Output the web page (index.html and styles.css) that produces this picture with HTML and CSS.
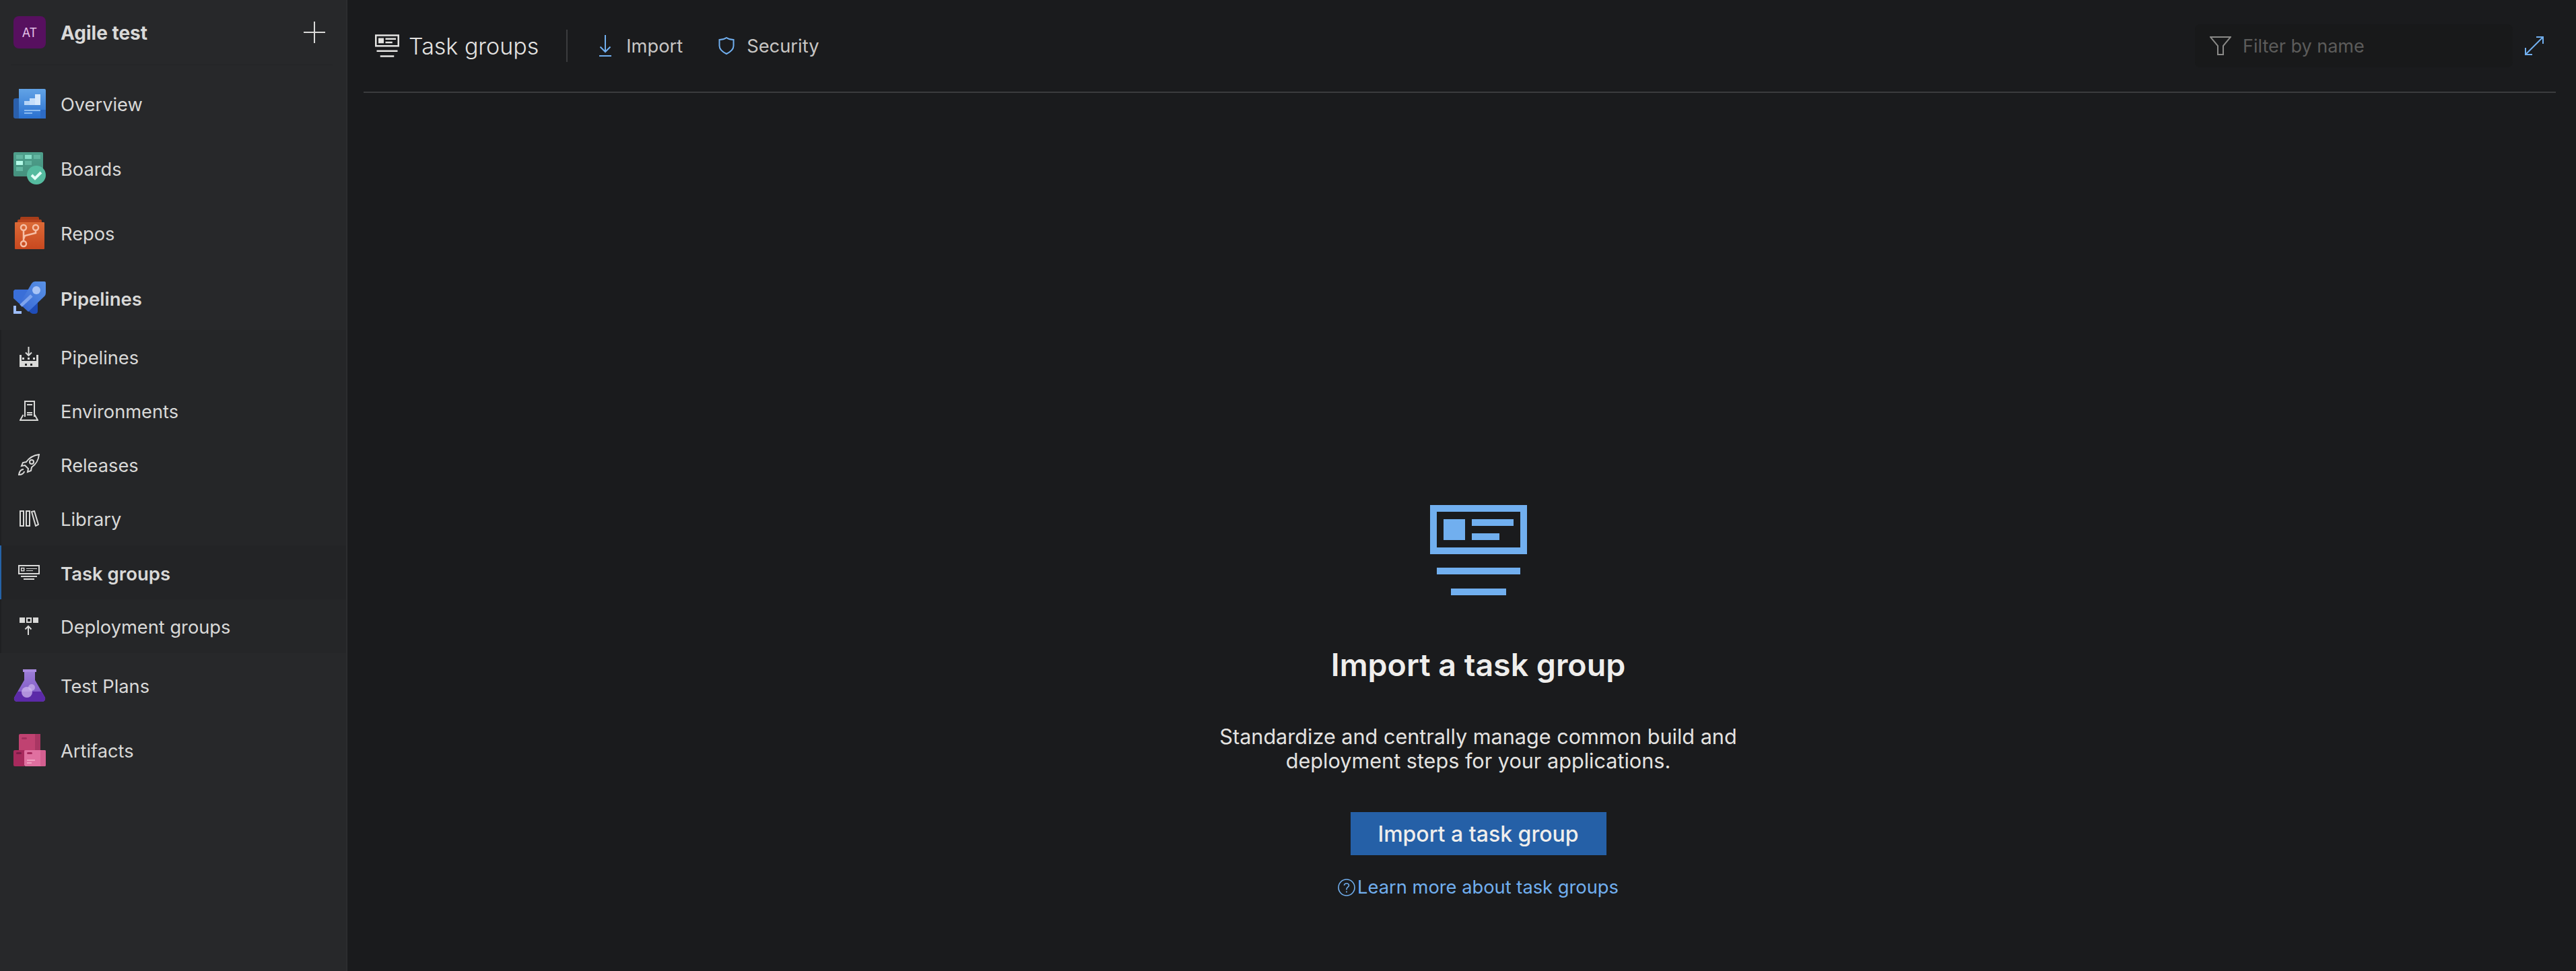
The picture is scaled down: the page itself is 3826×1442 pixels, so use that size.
FILE: index.html
```html
<!DOCTYPE html>
<html lang="en">
<head>
    <meta charset="UTF-8">
    <meta name="viewport" content="width=device-width, initial-scale=1.0">
    <title>Task groups</title>
    <link rel="stylesheet" href="styles.css">
</head>
<body>
    <svg class="defs" width="0" height="0">
        <defs>
            <symbol id="taskgroup" viewBox="0 0 144 134">
                <path fill-rule="evenodd" d="M0 0H144V73H0ZM10 10V63H134V10Z"/>
                <rect x="20" y="21" width="32" height="31"/>
                <rect x="62" y="21" width="62" height="10"/>
                <rect x="62" y="42" width="41" height="10"/>
                <rect x="10" y="93" width="124" height="10"/>
                <rect x="31" y="124" width="82" height="10"/>
            </symbol>
            <linearGradient id="gradOverview" x1="0" y1="0" x2="0" y2="1"><stop offset="0" stop-color="#62a3e6"/><stop offset="1" stop-color="#2a71d0"/></linearGradient>
            <linearGradient id="gradBoards" x1="0" y1="0" x2="0" y2="1"><stop offset="0" stop-color="#4e9f8b"/><stop offset="1" stop-color="#45917e"/></linearGradient>
            <linearGradient id="gradRepos" x1="0" y1="0" x2="0" y2="1"><stop offset="0" stop-color="#dc6a37"/><stop offset="1" stop-color="#c8481f"/></linearGradient>
            <linearGradient id="gradRocket" x1="0" y1="1" x2="1" y2="0"><stop offset="0" stop-color="#3565d3"/><stop offset="1" stop-color="#5a93e6"/></linearGradient>
            <linearGradient id="gradFlask" x1="0" y1="0" x2="0" y2="1"><stop offset="0" stop-color="#9a7bd6"/><stop offset="1" stop-color="#7a52c2"/></linearGradient>
        </defs>
    </svg>

    <aside class="sidebar">
        <div class="project">
            <span class="avatar">AT</span>
            <span class="project-name">Agile test</span>
            <svg class="plus" viewBox="0 0 32 32"><path d="M0 16H32M16 0V32"/></svg>
        </div>

        <nav class="nav">
            <a class="nav-item">
                <svg class="hub-icon" viewBox="0 0 48 48">
                    <rect x="0" y="16" width="20" height="30" rx="3" fill="#2a5fab"/>
                    <path d="M8 2H46Q48 2 48 4V44Q48 46 46 46H8Z" fill="url(#gradOverview)"/>
                    <rect x="40" y="33" width="8" height="13" fill="#2d6bc4"/>
                    <rect x="16" y="20" width="8" height="6" fill="#b5d4f7"/>
                    <rect x="24" y="16" width="8" height="10" fill="#c4defa"/>
                    <rect x="32" y="10" width="8" height="16" fill="#d5e8fc"/>
                    <rect x="16" y="33" width="24" height="2" fill="#8cbcf0"/>
                    <rect x="16" y="37" width="12" height="2" fill="#8cbcf0"/>
                </svg>
                <span>Overview</span>
            </a>
            <a class="nav-item">
                <svg class="hub-icon" viewBox="0 0 48 48">
                    <rect x="0" y="0" width="44" height="36" rx="2" fill="url(#gradBoards)"/>
                    <rect x="4" y="4" width="10" height="6" fill="#62b5a0"/>
                    <rect x="17" y="4" width="10" height="6" fill="#86dcc6"/>
                    <rect x="30" y="4" width="10" height="6" fill="#62b5a0"/>
                    <rect x="4" y="13" width="10" height="6" fill="#b6fbe9"/>
                    <rect x="17" y="13" width="10" height="6" fill="#62b5a0"/>
                    <rect x="4" y="22" width="10" height="6" fill="#62b5a0"/>
                    <circle cx="34" cy="34" r="14" fill="#55bb9f"/>
                    <path d="M27 34L32 39L41 30" fill="none" stroke="#e4fff7" stroke-width="4"/>
                </svg>
                <span>Boards</span>
            </a>
            <a class="nav-item">
                <svg class="hub-icon" viewBox="0 0 48 48">
                    <rect x="10" y="0" width="28" height="6" rx="2" fill="#a83d19"/>
                    <rect x="6" y="4" width="36" height="6" rx="2" fill="#b8441e"/>
                    <rect x="2" y="8" width="44" height="40" rx="1" fill="url(#gradRepos)"/>
                    <g fill="none" stroke="#f6bfa6" stroke-width="2.5">
                        <circle cx="15" cy="16" r="4"/>
                        <circle cx="33" cy="16" r="4"/>
                        <circle cx="15" cy="40" r="4"/>
                        <path d="M15 20V36M15 33L17 28L33 24V20"/>
                    </g>
                </svg>
                <span>Repos</span>
            </a>
            <a class="nav-item nav-hub-active">
                <svg class="hub-icon" viewBox="0 0 48 48">
                    <path d="M2 12H24L12 36L0 25V14Z" fill="#3a6fd8"/>
                    <path d="M36 22V44Q36 48 32 48H29Q27 48 25 46L16 38Z" fill="#1f4db8"/>
                    <path d="M27 3Q29 0 32 0H46Q48 0 48 2V17Q48 20 46 22L22 45L10 34L11 30Z" fill="url(#gradRocket)"/>
                    <circle cx="34" cy="13" r="6" fill="#a9c4f6"/>
                    <path d="M11 36L27 21" stroke="#7ea4ee" stroke-width="5"/>
                    <path d="M0 36H4V44H12V48H0Z" fill="#9dbdf9"/>
                </svg>
                <span>Pipelines</span>
            </a>

            <div class="subnav">
                <a class="sub-item">
                    <span class="sub-icon">
                        <svg width="28" height="30" viewBox="0 0 28 30">
                            <path class="ln" d="M13.5 0V13M9 8.5L13.5 13L18 8.5"/>
                            <path class="fl" fill-rule="evenodd" d="M0 12H3V21H25V12H28V30H0ZM8 25V28H11V25ZM16 25V28H19V25Z"/>
                            <rect class="fl" x="4" y="16" width="3" height="3"/>
                            <rect class="fl" x="12" y="16" width="3" height="3"/>
                            <rect class="fl" x="20" y="16" width="3" height="3"/>
                        </svg>
                    </span>
                    <span>Pipelines</span>
                </a>
                <a class="sub-item">
                    <span class="sub-icon">
                        <svg width="28" height="30" viewBox="0 0 28 30">
                            <path class="ln" d="M8 24V1H22V24M11 6H19M11 18H19M11 21H19"/>
                            <path class="ln" d="M5.5 21L1 29H27L22.5 21"/>
                        </svg>
                    </span>
                    <span>Environments</span>
                </a>
                <a class="sub-item">
                    <span class="sub-icon">
                        <svg width="32" height="32" viewBox="0 0 32 32">
                            <path class="ln" d="M31 1C23 2 17 5 12 12L7 13L5 18L10 17L15 22L14 27L19 25L20 20C27 15 30 10 31 1Z"/>
                            <circle class="ln" cx="20" cy="12" r="3"/>
                            <path class="ln" d="M8 23C5 23 2 25 1 31C5 31 9 29 9 26"/>
                        </svg>
                    </span>
                    <span>Releases</span>
                </a>
                <a class="sub-item">
                    <span class="sub-icon">
                        <svg width="29" height="24" viewBox="0 0 29 24">
                            <rect class="ln" x="1" y="1" width="5" height="22"/>
                            <rect class="ln" x="10" y="1" width="5" height="22"/>
                            <path class="ln" d="M18 2L22 1L28 21L24 23Z"/>
                        </svg>
                    </span>
                    <span>Library</span>
                </a>
                <a class="sub-item sub-item-active">
                    <span class="sub-icon">
                        <svg width="32" height="22" viewBox="0 0 32 22">
                            <rect class="ln" x="1" y="1" width="30" height="12"/>
                            <rect class="ln thin" x="4.7" y="4.7" width="4" height="4"/>
                            <path class="fl" d="M12 5H28V6H12ZM12 8H22V9H12ZM4 16H28V18H4ZM8 20H24V22H8Z"/>
                        </svg>
                    </span>
                    <span>Task groups</span>
                </a>
                <a class="sub-item">
                    <span class="sub-icon">
                        <svg width="28" height="26" viewBox="0 0 28 26">
                            <rect class="fl" x="0" y="0" width="8" height="8"/>
                            <rect class="ln" x="11" y="1" width="6" height="6"/>
                            <rect class="fl" x="20" y="0" width="8" height="8"/>
                            <path class="ln" d="M13 26V13M8.5 17.5L13 13L17.5 17.5"/>
                        </svg>
                    </span>
                    <span>Deployment groups</span>
                </a>
            </div>

            <a class="nav-item">
                <svg class="hub-icon" viewBox="0 0 48 48">
                    <path d="M16 4H32V16L47 42Q48 48 42 48H6Q0 48 1 42L16 16Z" fill="url(#gradFlask)"/>
                    <path d="M6.5 33H41.5L47 42Q48 48 42 48H6Q0 48 1 42Z" fill="#5c2aa8"/>
                    <rect x="14" y="0" width="20" height="4" fill="#a98ae0"/>
                    <circle cx="27" cy="27" r="5" fill="#c6aeea" opacity=".75"/>
                    <circle cx="20" cy="34" r="8" fill="#cdb6ee" opacity=".75"/>
                </svg>
                <span>Test Plans</span>
            </a>
            <a class="nav-item">
                <svg class="hub-icon" viewBox="0 0 48 48">
                    <rect x="8" y="0" width="32" height="26" rx="2" fill="#c04271"/>
                    <rect x="32" y="0" width="8" height="26" fill="#a93663"/>
                    <path d="M2 24H16V48H2Q0 48 0 46V26Q0 24 2 24Z" fill="#a82a5d"/>
                    <rect x="16" y="24" width="32" height="24" rx="2" fill="#e070a0"/>
                    <rect x="40" y="24" width="8" height="24" rx="2" fill="#d45f90"/>
                    <rect x="4" y="27" width="8" height="3" rx="1.5" fill="#7d1c48"/>
                    <rect x="20" y="27" width="8" height="3" rx="1.5" fill="#a82a5d"/>
                    <rect x="12" y="5" width="8" height="3" rx="1.5" fill="#a32f5d"/>
                    <rect x="20" y="38" width="12" height="2" fill="#f0a0c0"/>
                    <rect x="20" y="42" width="7" height="2" fill="#f0a0c0"/>
                </svg>
                <span>Artifacts</span>
            </a>
        </nav>
    </aside>

    <main class="main">
        <header class="toolbar">
            <svg class="title-icon"><use href="#taskgroup"/></svg>
            <h1 class="title">Task groups</h1>
            <span class="toolbar-sep"></span>
            <a class="tool">
                <svg width="18" height="32" viewBox="0 0 18 32">
                    <path d="M9 0V25M1.5 17.5L9 25L16.5 17.5M0 31H18" fill="none" stroke="currentColor" stroke-width="2"/>
                </svg>
                <span>Import</span>
            </a>
            <a class="tool">
                <svg width="24" height="26" viewBox="0 0 24 26">
                    <path d="M12 1C9 3 6 4 1.5 4V13C1.5 18 6 22 12 25C18 22 22.5 18 22.5 13V4C18 4 15 3 12 1Z" fill="none" stroke="currentColor" stroke-width="2"/>
                </svg>
                <span>Security</span>
            </a>
            <div class="filter">
                <svg width="32" height="28" viewBox="0 0 32 28">
                    <path d="M1 1H31L20 14V27H12V14Z" fill="none" stroke="#8a8a88" stroke-width="2"/>
                </svg>
                <span class="filter-text">Filter by name</span>
            </div>
            <svg class="expand" width="28" height="28" viewBox="0 0 28 28">
                <path d="M1 27L27 1M17 1H27V11M1 17V27H11" fill="none" stroke="currentColor" stroke-width="2"/>
            </svg>
        </header>

        <section class="empty">
            <svg class="empty-icon"><use href="#taskgroup"/></svg>
            <h2 class="empty-title">Import a task group</h2>
            <p class="empty-text">Standardize and centrally manage common build and<br>deployment steps for your applications.</p>
            <button class="primary">Import a task group</button>
            <a class="learn">
                <svg width="26" height="26" viewBox="0 0 26 26">
                    <circle cx="13" cy="13" r="12" fill="none" stroke="currentColor" stroke-width="1.6"/>
                    <path d="M9.5 10C9.5 8 11 7 13 7C15 7 16.5 8.2 16.5 10C16.5 12.5 13 12.5 13 15.5V16.5" fill="none" stroke="currentColor" stroke-width="1.6"/>
                    <circle cx="13" cy="19.5" r="1.1" fill="currentColor"/>
                </svg>
                <span>Learn more about task groups</span>
            </a>
        </section>
    </main>
</body>
</html>
```

FILE: styles.css
```css
* {
    box-sizing: border-box;
}
html, body {
    margin: 0;
    height: 100%;
    overflow: hidden;
}
body {
    display: flex;
    font-family: Inter, "Noto Sans", sans-serif;
    background: #1a1b1d;
    color: #d9d9d8;
}
.defs {
    position: absolute;
}

/* sidebar */
.sidebar {
    flex: none;
    width: 516px;
    background: #27282a;
    border-right: 2px solid #2c2d2f;
}
.project {
    position: relative;
    display: flex;
    align-items: center;
    height: 97px;
    padding: 0 0 1px 20px;
}
.project::after {
    content: "";
    position: absolute;
    left: 16px;
    right: 20px;
    bottom: 0;
    height: 1px;
    background: #232426;
}
.avatar {
    display: flex;
    align-items: center;
    justify-content: center;
    width: 48px;
    height: 48px;
    border-radius: 8px;
    background: #57105f;
    color: #e2bfe6;
    font-size: 18px;
}
.project-name {
    margin-left: 22px;
    padding-top: 2px;
    font-size: 28px;
    font-weight: 700;
}
.plus {
    width: 32px;
    height: 32px;
    margin-left: auto;
    margin-right: 31px;
    stroke: #d9d9d8;
    stroke-width: 2;
}
.nav {
    padding-top: 9px;
}
.nav a {
    display: flex;
    align-items: center;
    font-size: 27.25px;
}
.nav a > span:last-child {
    padding-top: 3px;
}
.nav-item {
    height: 96px;
    padding-left: 20px;
}
.hub-icon {
    flex: none;
    width: 48px;
    height: 48px;
    margin-right: 22px;
}
.nav .nav-hub-active {
    font-size: 27.5px;
    font-weight: 600;
}
.subnav {
    background: #252628;
    border-left: 2px solid #1f2022;
}
.sub-item {
    height: 80px;
}
.sub-icon {
    display: flex;
    justify-content: center;
    align-items: center;
    flex: none;
    width: 82px;
    margin-right: 6px;
}
.nav .sub-item-active {
    position: relative;
    font-size: 27.5px;
    font-weight: 600;
    background: #232426;
}
.sub-item-active::before {
    content: "";
    position: absolute;
    left: -2px;
    top: 0;
    bottom: 0;
    width: 2px;
    background: #2563a8;
}
.ln {
    fill: none;
    stroke: #d9d9d8;
    stroke-width: 2;
}
.thin {
    stroke-width: 1.5;
}
.fl {
    fill: #d9d9d8;
}

/* main */
.main {
    flex: 1;
    min-width: 0;
    padding: 0 30px 0 24px;
}
.toolbar {
    display: flex;
    align-items: center;
    height: 138px;
    padding-left: 17px;
    border-bottom: 2px solid #3b3c3e;
}
.title-icon {
    flex: none;
    width: 36px;
    height: 34px;
    fill: #e4e3e1;
}
.title {
    margin: 0 0 0 14px;
    font-size: 34px;
    font-weight: 300;
    color: #e4e3e1;
}
.toolbar-sep {
    width: 2px;
    height: 48px;
    margin: 0 47px 0 41px;
    background: #3b3c3e;
}
.tool {
    display: flex;
    align-items: center;
    margin-right: 53px;
    font-size: 27.3px;
    font-weight: 400;
    color: #c8c6c4;
}
.tool svg {
    color: #71afef;
    margin-right: 22px;
}
.tool + .tool svg {
    margin-right: 18px;
}
.filter {
    display: flex;
    align-items: center;
    width: 472px;
    height: 64px;
    margin-left: auto;
    padding-left: 22px;
    border-radius: 8px;
    background: #18191a;
}
.filter-text {
    margin-left: 17px;
    padding-top: 1px;
    font-size: 27px;
    color: #5c5c5b;
}
.expand {
    flex: none;
    margin: 0 18px;
    color: #71afef;
}

/* empty state */
.empty {
    display: flex;
    flex-direction: column;
    align-items: center;
    padding: 612px 0 0 55px;
}
.empty-icon {
    width: 144px;
    height: 134px;
    fill: #71afef;
}
.empty-title {
    margin: 74px 0 0;
    font-size: 46.5px;
    line-height: 58px;
    font-weight: 600;
    color: #efeeec;
}
.empty-text {
    margin: 60px 0 0;
    font-size: 30.6px;
    line-height: 36px;
    text-align: center;
    color: #e4e3e1;
}
.primary {
    width: 380px;
    height: 64px;
    margin-top: 58px;
    border: none;
    background: #2560a7;
    color: #efeeec;
    font-family: inherit;
    font-size: 32px;
    font-weight: 500;
}
.learn {
    display: flex;
    align-items: center;
    margin-top: 31px;
    font-size: 27.3px;
    color: #71afef;
}
.learn svg {
    margin-right: 3px;
}
```
